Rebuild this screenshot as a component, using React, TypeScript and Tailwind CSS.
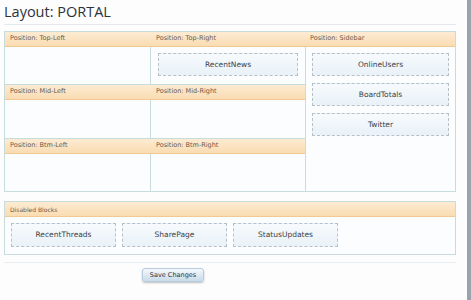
import React from 'react';

const font = { fontFamily: '"DejaVu Sans", Verdana, sans-serif' };

function Header({ label, className = '' }: { label: string; className?: string }) {
  return (
    <div
      className={`h-[15px] flex items-center pl-[5px] text-[6.5px] text-[#6b5a48] bg-gradient-to-b from-[#fdebd2] to-[#f9dcb2] border-b border-[#f0c994] ${className}`}
    >
      {label}
    </div>
  );
}

function Block({ name, className = '' }: { name: string; className?: string }) {
  return (
    <div
      className={`flex items-center justify-center text-[7.5px] text-[#3a3f48] bg-gradient-to-b from-[#f7fafd] to-[#e9f2f8] border border-dashed border-[#b7c0c8] ${className}`}
    >
      {name}
    </div>
  );
}

export default function App() {
  return (
    <div className="w-[471px] h-[300px] bg-white flex" style={font}>
      <div className="w-[467px] pl-[4px] pr-[11px] bg-[#fdfdfe]">
        <div className="h-[25px] border-b border-[#e3e9ef] flex items-end pb-[5px]">
          <h1 className="text-[14.5px] leading-none text-[#2e3238]" style={{ fontFamily: '"Open Sans", "DejaVu Sans", sans-serif' }}>
            Layout: PORTAL
          </h1>
        </div>

        {/* positions table */}
        <div className="mt-[6px] border border-[#c7dcdc] bg-[#fcfdff]">
          <div className="flex">
            <Header label="Position: Top-Left" className="w-[146px]" />
            <Header label="Position: Top-Right" className="w-[154px]" />
            <Header label="Position: Sidebar" className="flex-1" />
          </div>
          <div className="flex">
            <div className="w-[300px] flex flex-col">
              <div className="h-[37px] flex">
                <div className="w-[146px] border-r border-[#c7dcdc]" />
                <div className="flex-1 pt-[6px] px-[7px]">
                  <Block name="RecentNews" className="h-[23px]" />
                </div>
              </div>
              <div className="flex border-t border-[#c7dcdc]">
                <Header label="Position: Mid-Left" className="w-[146px]" />
                <Header label="Position: Mid-Right" className="flex-1" />
              </div>
              <div className="h-[38px] flex">
                <div className="w-[146px] border-r border-[#c7dcdc]" />
              </div>
              <div className="flex border-t border-[#c7dcdc]">
                <Header label="Position: Btm-Left" className="w-[146px]" />
                <Header label="Position: Btm-Right" className="flex-1" />
              </div>
              <div className="h-[37px] flex">
                <div className="w-[146px] border-r border-[#c7dcdc]" />
              </div>
            </div>
            <div className="flex-1 border-l border-[#c7dcdc] pt-[6px] px-[6px] flex flex-col gap-[7px]">
              <Block name="OnlineUsers" className="h-[23px]" />
              <Block name="BoardTotals" className="h-[23px]" />
              <Block name="Twitter" className="h-[23px]" />
            </div>
          </div>
        </div>

        {/* disabled blocks */}
        <div className="mt-[9px] border border-[#c7dcdc] bg-[#fcfdff]">
          <Header label="Disabled Blocks" className="text-[6px]" />
          <div className="flex gap-[6px] px-[6px] pt-[6px] pb-[7px]">
            <Block name="RecentThreads" className="w-[105px] h-[24px]" />
            <Block name="SharePage" className="w-[105px] h-[24px]" />
            <Block name="StatusUpdates" className="w-[105px] h-[24px]" />
          </div>
        </div>

        <div className="mt-[7px] border-t border-[#e8edf2] pl-[138px] pt-[5px] flex">
          <button className="w-[62px] h-[14px] rounded-[3px] text-[6.5px] leading-none text-[#2e3440] bg-gradient-to-b from-[#f4f8fc] to-[#c9dbea] border border-[#b9ccdc] shadow-[0_1px_2px_rgba(0,0,0,0.25)]">
            Save Changes
          </button>
        </div>
      </div>
      <div className="w-[4px] bg-[#9aa3ab]" />
    </div>
  );
}
